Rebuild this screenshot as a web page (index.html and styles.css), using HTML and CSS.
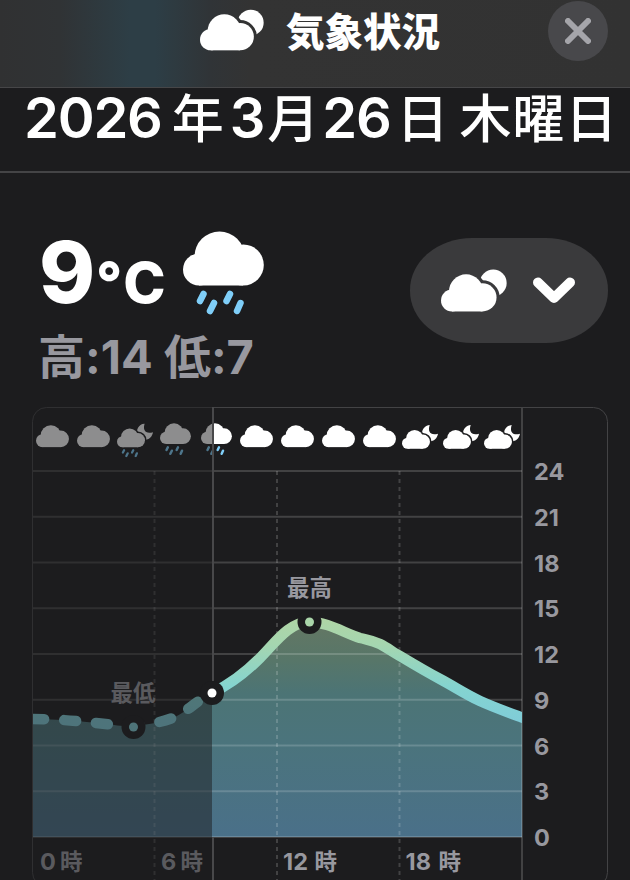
FILE: index.html
```html
<!DOCTYPE html>
<html lang="ja">
<head>
  <meta charset="UTF-8" />
  <meta name="viewport" content="width=device-width, initial-scale=1.0" />
  <title>気象状況</title>
  <link rel="stylesheet" href="styles.css">
</head>
<body>

  <!-- shared icons -->
  <svg class="sprite" width="0" height="0" aria-hidden="true">
    <defs>
      <g id="cloud-shape">
        <circle cx="16" cy="38.5" r="16" />
        <circle cx="36.5" cy="25.5" r="25" />
        <circle cx="60.3" cy="34" r="20.5" />
        <path d="M16 30H60V54.5H16Z" />
      </g>
      <symbol id="cloud" viewBox="0 0 81 55">
        <use href="#cloud-shape" />
      </symbol>
      <symbol id="rain" viewBox="0 0 81 84">
        <use href="#cloud-shape" />
        <path class="drops" d="M20.5 63L17 70M31 72L27 80M47 63L43.500 70M57.500 72L54 80" />
      </symbol>
      <mask id="cloud-gap" maskUnits="userSpaceOnUse" x="0" y="-20" width="120" height="110">
        <rect x="0" y="-20" width="120" height="110" fill="#fff" />
        <use href="#cloud-shape" fill="#000" stroke="#000" stroke-width="9" />
      </mask>
      <symbol id="cloud-sun" viewBox="0 -7 96 62">
        <use href="#cloud-shape" />
        <circle cx="76" cy="13" r="19.500" mask="url(#cloud-gap)" />
      </symbol>
      <g id="moon" mask="url(#cloud-gap)">
        <path d="M80 -14C74 4 81 17 104 11C102 24 92 33 80 33C66 33 57 20 58 8C59 -4 68 -13 80 -14Z" />
      </g>
      <symbol id="cloud-moon" viewBox="0 -14 104 69">
        <use href="#cloud-shape" />
        <use href="#moon" />
      </symbol>
      <symbol id="rain-moon" viewBox="0 -14 104 98">
        <use href="#cloud-shape" />
        <use href="#moon" />
        <path class="drops" d="M20.500 63L17 70M31 72L27 80M47 63L43.500 70M57.500 72L54 80" />
      </symbol>
    </defs>
  </svg>

  <header class="header">
    <div class="header-title">
      <svg class="header-icon"><use href="#cloud-sun" /></svg>
      <h1>気象状況</h1>
    </div>
    <button class="close-button" aria-label="閉じる">
      <svg width="26" height="26" viewBox="0 0 26 26"><path d="M3 3L23 23M23 3L3 23" /></svg>
    </button>
  </header>

  <div class="date">
    <span class="num">2026</span><span class="year">年</span><span class="num month">3</span><span class="moon">月</span><span class="num day">26</span><span class="sun">日</span><span class="weekday">木曜日</span>
  </div>

  <main class="content">
    <section class="current">
      <div>
        <div class="temp">
          <span class="temp-value">9</span><span class="temp-unit">°C</span>
          <svg class="temp-icon"><use href="#rain" /></svg>
        </div>
        <div class="range">高:14 低:7</div>
      </div>
      <button class="picker" aria-label="表示を選択">
        <svg class="picker-icon"><use href="#cloud-sun" /></svg>
        <svg class="chevron" width="42" height="27" viewBox="0 0 42 27"><path d="M5 5.500L21 21L37 5.500" /></svg>
      </button>
    </section>

    <section class="chart-card">
      <svg class="chart" width="576" height="500" viewBox="32 407 576 500">
        <defs>
          <linearGradient id="line" gradientUnits="userSpaceOnUse" x1="0" y1="616" x2="0" y2="837">
            <stop offset="0" stop-color="#b0d5a4" />
            <stop offset="0.130" stop-color="#a5d6b0" />
            <stop offset="0.320" stop-color="#84d4d0" />
            <stop offset="0.470" stop-color="#80cdd8" />
            <stop offset="1" stop-color="#78bfe8" />
          </linearGradient>
          <linearGradient id="area" gradientUnits="userSpaceOnUse" x1="0" y1="622" x2="0" y2="837">
            <stop offset="0" stop-color="#647763" />
            <stop offset="0.180" stop-color="#577669" />
            <stop offset="0.330" stop-color="#4c7475" />
            <stop offset="0.550" stop-color="#4b747c" />
            <stop offset="1" stop-color="#4a7089" />
          </linearGradient>
          <clipPath id="plot"><rect x="32" y="471" width="490" height="366" /></clipPath>
        </defs>

        <path fill="url(#area)" d="M32 719C65 719 97 723 114 725C132 728 158 724 175 717C188 711 196 701 212 693C229 685 243 675 260 658C275 643 289 622 309 622C328 622 344 633 360 638C368 640 372 640 380 644C388 648 394 653 400 656C415 665 425 671 440 679C455 687 465 694 480 701C493 707 507 712 522 717.500V837H32Z" />

        <g class="grid">
          <path d="M32 471H522M32 516.750H522M32 562.500H522M32 608.250H522M32 654H522M32 699.750H522M32 745.500H522M32 791.250H522M32 837H522" />
          <path d="M522 407V907" />
          <path class="dashed" d="M154.500 471V907M277 471V907M399.500 471V907" />
        </g>

        <g clip-path="url(#plot)">
          <path class="line line-past" d="M32 719C65 719 97 723 114 725C132 728 158 724 175 717C188 711 196 701 212 693" />
          <path class="line" d="M212 693C229 685 243 675 260 658C275 643 289 622 309 622C328 622 344 633 360 638C368 640 372 640 380 644C388 648 394 653 400 656C415 665 425 671 440 679C455 687 465 694 480 701C493 707 507 712 522 717.500L530 720.500" />
        </g>

        <circle class="ring" cx="133.500" cy="727" r="12" />
        <circle cx="133.500" cy="727" r="4.500" fill="#80cdd5" />
        <circle class="ring" cx="309.500" cy="622" r="12" />
        <circle cx="309.500" cy="622" r="4.500" fill="#aad6aa" />

        <g class="hours">
          <use href="#cloud" x="36" y="425" width="33" height="22.500" />
          <use href="#cloud" x="77" y="425" width="33" height="22.500" />
          <use href="#rain-moon" x="117" y="423.500" width="36" height="34" />
          <use href="#rain" x="160" y="423" width="31" height="32.500" />
          <use href="#rain" x="201" y="423" width="31" height="32.500" />
          <use href="#cloud" x="240" y="425" width="33" height="22.500" />
          <use href="#cloud" x="281" y="425" width="33" height="22.500" />
          <use href="#cloud" x="322" y="425" width="33" height="22.500" />
          <use href="#cloud" x="363" y="425" width="33" height="22.500" />
          <use href="#cloud-moon" x="402" y="425" width="36" height="24" />
          <use href="#cloud-moon" x="443" y="425" width="36" height="24" />
          <use href="#cloud-moon" x="484" y="425" width="36" height="24" />
        </g>

        <g class="label">
          <text class="kanji" x="110.500" y="701">最低</text>
          <text class="kanji" x="287" y="596">最高</text>
          <text x="40" y="870">0</text><text class="kanji" x="60" y="870">時</text>
          <text x="161" y="870">6</text><text class="kanji" x="180.500" y="870">時</text>
          <text x="283" y="870">12</text><text class="kanji" x="314.500" y="870">時</text>
          <text x="405.500" y="870">18</text><text class="kanji" x="438.500" y="870">時</text>
        </g>

        <rect class="frame" x="32.500" y="407.500" width="575" height="479" rx="14" />

        <!-- past hours are dimmed -->
        <rect class="past" x="32" y="407" width="180" height="500" />
        <path class="now" d="M213 407V681M213 837V907" />
        <circle class="ring" cx="212" cy="693" r="12" />
        <circle cx="212" cy="693" r="4.500" fill="#fff" />

        <g class="label">
          <text x="534" y="480">24</text>
          <text x="534" y="525.750">21</text>
          <text x="534" y="571.500">18</text>
          <text x="534" y="617.250">15</text>
          <text x="534" y="663">12</text>
          <text x="534" y="708.750">9</text>
          <text x="534" y="754.500">6</text>
          <text x="534" y="800.250">3</text>
          <text x="534" y="846">0</text>
        </g>
      </svg>
    </section>
  </main>

</body>
</html>
```

FILE: styles.css
```css
* {
  box-sizing: border-box;
}
body {
  font-family: Inter, 'Noto Sans CJK JP', sans-serif;
  background-color: #1c1c1e;
  color: #fff;
  margin: 0;
  height: 880px;
  overflow: hidden;
}
button {
  border: none;
  padding: 0;
  display: flex;
  align-items: center;
}
.sprite {
  display: block;
}
.drops {
  stroke: #7fcef8;
  stroke-width: 6.5;
  stroke-linecap: round;
}
.header {
  display: grid;
  grid-template-columns: 200px 1fr 60px;
  height: 88px;
  padding-right: 22px;
  border-bottom: 1px solid #464648;
  background: linear-gradient(90deg, #303132 0, #303335 60px, #2d3e46 130px, #2d3e46 155px, #303437 210px, #333 250px, #323232 100%);
}
.header-title {
  grid-column: 2;
  display: flex;
  align-items: flex-start;
  gap: 22px;
}
.header-icon {
  width: 64px;
  height: 42px;
  margin-top: 9px;
  fill: #fff;
}
h1 {
  margin: 5px 0 0;
  font-size: 38.5px;
  font-weight: 900;
  line-height: 54px;
}
.close-button {
  width: 60px;
  height: 60px;
  margin-top: 1px;
  border-radius: 50%;
  justify-content: center;
  background-color: #48484b;
}
.close-button path {
  fill: none;
  stroke: #a5a5aa;
  stroke-width: 6;
  stroke-linecap: round;
}
.date {
  display: flex;
  align-items: baseline;
  height: 85px;
  padding-left: 24px;
  border-bottom: 2px solid #444446;
  font-size: 52px;
  font-weight: 500;
  line-height: 60px;
  white-space: nowrap;
}
.num {
  font-size: 56px;
  font-weight: 600;
  letter-spacing: -1.2px;
}
.year {
  margin-left: 10px;
}
.month {
  margin-left: 6px;
}
.moon {
  margin-left: 3px;
}
.day {
  margin-left: 3px;
}
.sun {
  margin-left: 6px;
}
.weekday {
  margin-left: 11px;
  letter-spacing: 0.8px;
}
.content {
  padding: 58px 22px 0 32px;
}
.current {
  display: flex;
  justify-content: space-between;
  height: 176px;
  padding-left: 6px;
}
.temp {
  display: flex;
  align-items: baseline;
  height: 91px;
  padding-left: 1px;
  line-height: 83px;
  font-weight: 800;
}
.temp-value {
  width: 57px;
  font-size: 85px;
}
.temp-unit {
  width: 72px;
  font-size: 57px;
  letter-spacing: 2px;
}
.temp-icon {
  width: 81px;
  height: 84px;
  margin-left: 15px;
  align-self: flex-start;
  fill: #fff;
}
.range {
  color: #98989f;
  font-size: 47px;
  font-weight: 700;
  line-height: 70px;
  font-feature-settings: 'calt' 0;
}
.picker {
  width: 198px;
  height: 105px;
  margin-top: 7px;
  border-radius: 62px / 52px;
  padding-left: 31px;
  gap: 26px;
  background-color: #3a3a3c;
}
.picker-icon {
  width: 66px;
  height: 43px;
  fill: #fff;
}
.chevron path {
  fill: none;
  stroke: #fff;
  stroke-width: 10;
  stroke-linecap: round;
  stroke-linejoin: round;
}
.chart {
  display: block;
}
.grid path {
  fill: none;
  stroke: #fff;
  stroke-opacity: 0.17;
  stroke-width: 2;
}
.grid .dashed {
  stroke-dasharray: 4 4;
}
.line {
  fill: none;
  stroke: url(#line);
  stroke-width: 10.5;
}
.line-past {
  stroke-linecap: round;
  stroke-dasharray: 12 20;
}
.ring {
  fill: #1c1c1e;
}
.hours {
  fill: #fff;
}
.label {
  fill: #98989f;
  font-size: 23.5px;
  font-weight: 700;
}
.kanji {
  font-size: 22.5px;
}
.past {
  fill: #1c1c1e;
  fill-opacity: 0.5;
}
.now {
  stroke: #48484a;
  stroke-width: 2;
}
.frame {
  fill: none;
  stroke: #434345;
}
```
